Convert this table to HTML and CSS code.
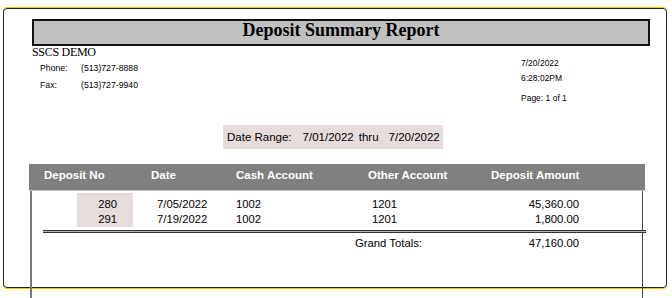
FILE: index.html
```html
<!DOCTYPE html>
<html>
<head>
<meta charset="utf-8">
<link rel="stylesheet" href="styles.css">
</head>
<body>
<div class="frame">
  <div class="title">Deposit Summary Report</div>
  <div class="info">
    <div class="company">
      <div class="name">SSCS DEMO</div>
      <div class="contact">
        <div class="crow"><span class="clabel">Phone:</span><span>(513)727-8888</span></div>
        <div class="crow"><span class="clabel">Fax:</span><span>(513)727-9940</span></div>
      </div>
    </div>
    <div class="stamp">
      <div>7/20/2022</div>
      <div>6:28:02PM</div>
      <div class="page">Page: 1 of 1</div>
    </div>
  </div>
  <div class="range">
    <span>Date Range:</span><span class="d1">7/01/2022</span><span class="thru">thru</span><span class="d2">7/20/2022</span>
  </div>
  <div class="thead">
    <div>Deposit No</div>
    <div>Date</div>
    <div>Cash Account</div>
    <div>Other Account</div>
    <div>Deposit Amount</div>
  </div>
  <div class="tbody">
    <div class="rows">
      <div class="col c-no"><div>280</div><div>291</div></div>
      <div class="col c-date"><div>7/05/2022</div><div>7/19/2022</div></div>
      <div class="col c-cash"><div>1002</div><div>1002</div></div>
      <div class="col c-other"><div>1201</div><div>1201</div></div>
      <div class="col c-amt"><div>45,360.00</div><div>1,800.00</div></div>
    </div>
    <div class="dline"></div>
    <div class="totals">
      <div class="tlabel">Grand Totals:</div>
      <div class="c-amt">47,160.00</div>
    </div>
  </div>
</div>
</body>
</html>
```
FILE: styles.css
```css
html, body {
  margin: 0;
  padding: 0;
  background: #fff;
}
body {
  font-family: "Liberation Sans", Arial, sans-serif;
  color: #000;
  overflow: hidden;
  height: 298px;
}
.frame {
  margin: 8px 0 0 3px;
  width: 664px;
  height: 280px;
  box-sizing: border-box;
  border: 1px solid #222;
  border-radius: 4px;
  box-shadow: 0 -1px 0 #f2c600, 0 1px 0 #f2c600;
}
.title {
  margin: 10px 0 0 28px;
  width: 618px;
  height: 27px;
  box-sizing: border-box;
  border: 2px solid #111;
  background: #c0c0c0;
  font-family: "Liberation Serif", "Times New Roman", serif;
  font-weight: bold;
  font-size: 18px;
  line-height: 18px;
  text-align: center;
}
.info {
  display: flex;
  align-items: flex-start;
}
.company {
  margin-left: 28px;
  width: 489px;
}
.name {
  font-family: "Liberation Serif", "Times New Roman", serif;
  font-size: 12px;
  line-height: 12px;
  letter-spacing: -0.3px;
}
.contact {
  padding: 2px 0 0 8px;
  font-size: 8.7px;
  line-height: 17px;
}
.clabel {
  display: inline-block;
  width: 41px;
}
.stamp {
  padding-top: 10px;
  font-size: 8.5px;
  line-height: 15px;
}
.page {
  margin-top: 5px;
}
.range {
  margin: 19px 0 0 219px;
  width: 220px;
  height: 24px;
  box-sizing: border-box;
  padding-left: 4px;
  background: #e6dcdc;
  font-size: 11.5px;
  line-height: 24px;
  white-space: nowrap;
}
.range .d1 { margin-left: 11px; }
.range .thru { margin-left: 5px; }
.range .d2 { margin-left: 10px; }
.thead {
  margin: 15px 0 0 25px;
  width: 616px;
  height: 27px;
  box-sizing: border-box;
  border-bottom: 1px solid #c4c4c4;
  padding-left: 15px;
  background: #808080;
  color: #fff;
  font-weight: bold;
  font-size: 11.5px;
  line-height: 22px;
  display: grid;
  grid-template-columns: 107px 85px 132px 123px auto;
}
.tbody {
  margin-left: 26px;
  width: 613px;
  height: 120px;
  box-sizing: border-box;
  border-left: 2px solid #7a7a7a;
  border-right: 1px solid #444;
  padding-top: 2px;
  font-size: 11.3px;
  line-height: 15px;
}
.rows {
  display: flex;
  padding-left: 45px;
}
.col {
  padding-top: 4px;
}
.c-no {
  width: 56px;
  box-sizing: border-box;
  padding-right: 16px;
  text-align: right;
  background: #e6dcdc;
}
.c-date {
  margin-left: 24px;
  width: 79px;
}
.c-cash {
  width: 136px;
}
.c-other {
  width: 130px;
}
.c-amt {
  width: 77px;
  text-align: right;
}
.dline {
  margin: 3px 0 0 11px;
  width: 603px;
  height: 3px;
  box-sizing: border-box;
  border-top: 1px solid #333;
  border-bottom: 1px solid #333;
  background: #b4b4b4;
}
.totals {
  display: flex;
  margin-top: 3px;
  padding-left: 323px;
}
.tlabel {
  width: 147px;
}
```
